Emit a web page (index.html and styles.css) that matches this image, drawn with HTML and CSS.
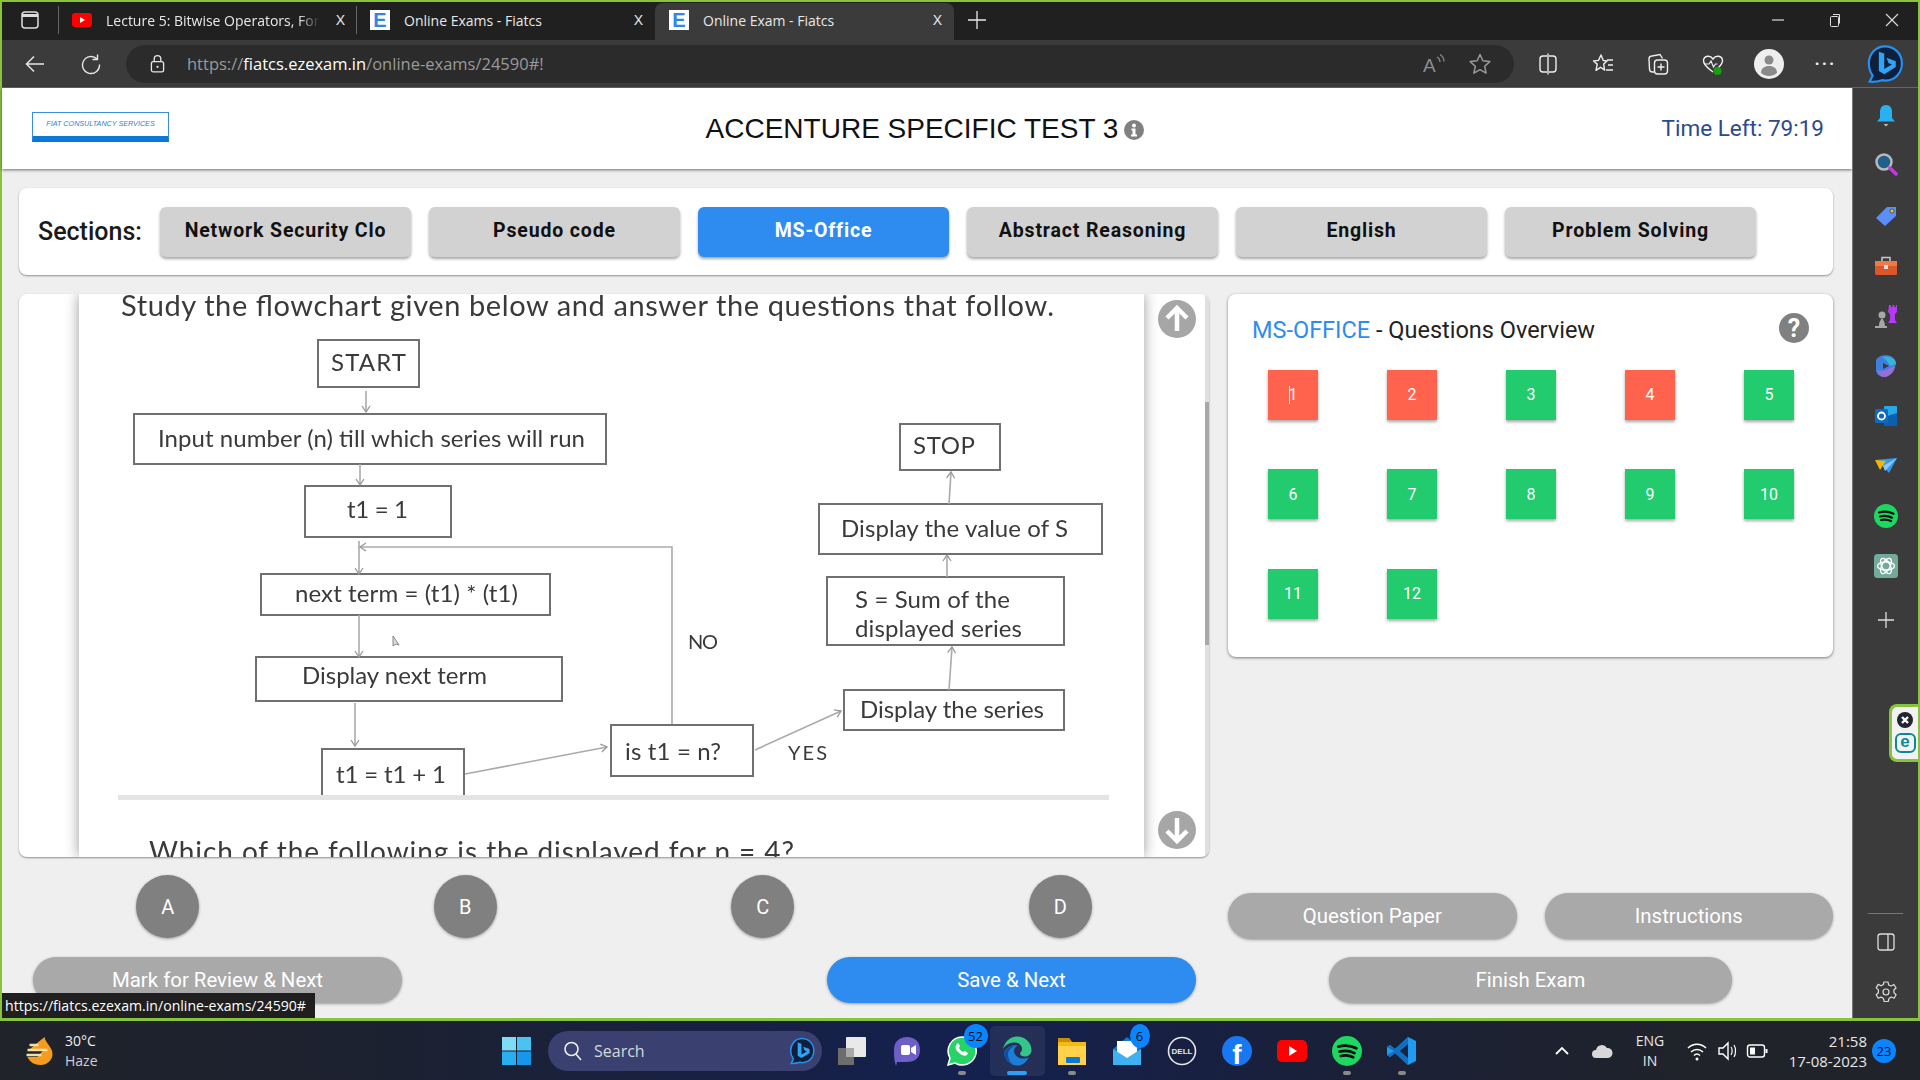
FILE: index.html
```html
<!DOCTYPE html>
<html lang="en">
<head>
    <meta charset="UTF-8">
    <title>Online Exam - Fiatcs</title>
    <link rel="stylesheet" href="styles.css">
</head>
<body>
    <svg class="defs" width="0" height="0">
        <symbol id="spotify" viewBox="0 0 24 24">
            <circle cx="12" cy="12" r="12" fill="#1ed760"/>
            <path d="M5 8.500c5-1.400 10-1 14.500 1.300M6 12.500c4-1 8.500-.7 12 1.200M7 16c3.500-.8 7-.5 10 1" fill="none" stroke="#111" stroke-width="2.200" stroke-linecap="round"/>
        </symbol>
        <symbol id="bing" viewBox="0 0 24 26">
            <path d="M12 1.500C6 1.500 1.500 6.500 1.500 12.500c0 3 1 6 2.500 8l-2 4c3 .3 6-.3 8-1 .8.200 1.500.3 2.500.3 6 0 10.500-5 10.500-11.300S18 1.500 12 1.500z" fill="#10203c" stroke="#2490f0" stroke-width="1.400"/>
            <path d="M8 5l3.500 1.200v10l5-2.800-2.200-1-1.300-3.400 6 2.200v3.800l-7.500 4.600L8 17.500z" fill="#2fa5f5"/>
        </symbol>
    </svg>

    <div class="window">
        <div class="titlebar">
            <svg class="tabs-icon" viewBox="0 0 18 18"><rect x="1" y="1" width="16" height="16" rx="3" fill="none" stroke="#ddd" stroke-width="1.500"/><path d="M1 4.500h16" stroke="#ddd" stroke-width="3"/></svg>
            <span class="tab-sep"></span>
            <div class="tab">
                <svg class="fav-yt" viewBox="0 0 20 14"><rect width="20" height="14" rx="3" fill="#f00"/><path d="M8 4l5 3-5 3z" fill="#fff"/></svg>
                <span class="tab-title tab-title-fade">Lecture 5: Bitwise Operators, For</span>
                <span class="tab-close">X</span>
            </div>
            <span class="tab-sep tab-sep-short"></span>
            <div class="tab">
                <span class="fav-e">E</span>
                <span class="tab-title">Online Exams - Fiatcs</span>
                <span class="tab-close">X</span>
            </div>
            <div class="tab tab-active">
                <span class="fav-e">E</span>
                <span class="tab-title">Online Exam - Fiatcs</span>
                <span class="tab-close">X</span>
            </div>
            <svg class="new-tab" viewBox="0 0 18 18"><path d="M9 0v18M0 9h18" stroke="#e8e8e8" stroke-width="1.300"/></svg>
            <div class="win-controls">
                <svg viewBox="0 0 14 14"><path d="M1 7h12" stroke="#ddd" stroke-width="1.200"/></svg>
                <svg viewBox="0 0 14 14"><rect x="2.500" y="3.500" width="8" height="10" rx="1" fill="none" stroke="#ddd"/><path d="M5 1.500h6.500v9" fill="none" stroke="#ddd"/></svg>
                <svg viewBox="0 0 14 14"><path d="M1 1l12 12M13 1L1 13" stroke="#ddd" stroke-width="1.100"/></svg>
            </div>
        </div>

        <div class="toolbar">
            <svg class="tool-icon tool-back" viewBox="0 0 22 22"><path d="M20 11H3M10 3.500L2.500 11l7.500 7.500" fill="none" stroke="#e6e6e6" stroke-width="1.500"/></svg>
            <svg class="tool-icon tool-reload" viewBox="0 0 22 22"><path d="M17 6a8.500 8.500 0 1 0 2.500 5.500M17.500 1.500V6.500H12.500" fill="none" stroke="#e6e6e6" stroke-width="1.400"/></svg>
            <div class="address">
                <svg class="lock" viewBox="0 0 16 20"><rect x="1.500" y="8" width="13" height="11" rx="2" fill="none" stroke="#e6e6e6" stroke-width="1.400"/><path d="M4.500 8V5a3.500 3.500 0 0 1 7 0v3" fill="none" stroke="#e6e6e6" stroke-width="1.400"/><circle cx="8" cy="13.500" r="1.200" fill="#e6e6e6"/></svg>
                <span class="url">https://<b>fiatcs.ezexam.in</b>/online-exams/24590#!</span>
                <svg class="addr-icon addr-read" viewBox="0 0 24 24"><text x="1" y="20" class="read-a">A</text><path d="M15 5c2 1 3 3 3 5M18 2.500c2.500 1.500 4 4 4 7" fill="none" stroke="#8d8d8d" stroke-width="1.200"/></svg>
                <svg class="addr-icon" viewBox="0 0 24 24"><path d="M12 2.500l2.900 6.300 6.900.8-5.100 4.700 1.400 6.800-6.100-3.400-6.100 3.400 1.400-6.800-5.100-4.700 6.900-.8z" fill="none" stroke="#9a9a9a" stroke-width="1.500" stroke-linejoin="round"/></svg>
            </div>
            <div class="tool-group">
                <svg viewBox="0 0 24 24"><path d="M11 4H7a3 3 0 0 0-3 3v10a3 3 0 0 0 3 3h4M13 4h4a3 3 0 0 1 3 3v10a3 3 0 0 1-3 3h-4M12 1.500v21" fill="none" stroke="#eee" stroke-width="1.400"/></svg>
                <svg viewBox="0 0 24 24"><path d="M10 3l2.300 5.500 3.700.4-3.300 3.200.9 6-4-2.800-4.600 3 1.200-6.200L2.500 9l5-.6z" fill="none" stroke="#eee" stroke-width="1.400" stroke-linejoin="round"/><path d="M16 8h6M17 13h5M15 18h7" stroke="#eee" stroke-width="1.400"/></svg>
                <svg viewBox="0 0 24 24"><path d="M8 20H6.500A3 3 0 0 1 3.500 17L3 7a3 3 0 0 1 3-3l8-1.500 2.500 4" fill="none" stroke="#eee" stroke-width="1.400"/><rect x="8.500" y="8" width="13" height="14" rx="3" fill="none" stroke="#eee" stroke-width="1.400"/><path d="M15 11.500v7M11.500 15h7" stroke="#eee" stroke-width="1.400"/></svg>
                <svg viewBox="0 0 24 24"><path d="M12 20C5 15 2 11.500 2.500 8c.6-4 6.500-5.500 9.500-1 3-4.500 9-3 9.500 1 .4 3.500-2.500 6-4.500 8" fill="none" stroke="#eee" stroke-width="1.400"/><path d="M3 12h5l2-3 2.500 6 2-3h2" fill="none" stroke="#eee" stroke-width="1.200"/><circle cx="16.500" cy="19" r="4" fill="#13a10e"/></svg>
                <svg class="avatar" viewBox="0 0 30 30"><circle cx="15" cy="15" r="15" fill="#eee"/><circle cx="15" cy="11" r="4.500" fill="#8a8a8a"/><path d="M7 24c0-5 3.500-7 8-7s8 2 8 7c-2.500 2-5 3-8 3s-5.500-1-8-3z" fill="#8a8a8a"/></svg>
                <span class="more">&middot;&middot;&middot;</span>
            </div>
            <svg class="tool-bing"><use href="#bing"/></svg>
        </div>

        <div class="body-row">
            <div class="page">
                <header class="exam-head">
                    <div class="logo"><span>FIAT CONSULTANCY SERVICES</span></div>
                    <h1 class="exam-title">ACCENTURE SPECIFIC TEST 3
                        <svg class="info" viewBox="0 0 20 20"><circle cx="10" cy="10" r="10" fill="#808080"/><circle cx="10" cy="5.500" r="2" fill="#fff"/><path d="M7.500 8.500h4v6h1.500v2H7v-2h1.500v-4h-1z" fill="#fff"/></svg>
                    </h1>
                    <div class="timer">Time Left: 79:19</div>
                </header>

                <section class="sections">
                    <span class="sections-label">Sections:</span>
                    <button class="section-btn">Network Security Clo</button>
                    <button class="section-btn">Pseudo code</button>
                    <button class="section-btn section-btn-active">MS-Office</button>
                    <button class="section-btn">Abstract Reasoning</button>
                    <button class="section-btn">English</button>
                    <button class="section-btn">Problem Solving</button>
                </section>

                <div class="exam-grid">
                    <div class="question">
                        <div class="q-strip"></div>
                        <div class="q-sheet">
                            <svg class="flowchart" viewBox="79 294 1065 563">
                                <defs>
                                    <marker id="head" markerWidth="9" markerHeight="10" refX="7" refY="5" orient="auto" markerUnits="userSpaceOnUse">
                                        <path d="M1 1l6 4-6 4" fill="none" stroke="#999" stroke-width="1.300"/>
                                    </marker>
                                </defs>
                                <text class="fc-title" x="121" y="316" textLength="933">Study the flowchart given below and answer the questions that follow.</text>

                                <g class="fc-box">
                                    <rect x="318" y="340" width="101" height="47"/>
                                    <rect x="134" y="414" width="472" height="50"/>
                                    <rect x="305" y="486" width="146" height="51"/>
                                    <rect x="261" y="574" width="289" height="41"/>
                                    <rect x="256" y="657" width="306" height="44"/>
                                    <rect x="322" y="749" width="142" height="48"/>
                                    <rect x="611" y="725" width="142" height="51"/>
                                    <rect x="844" y="690" width="220" height="40"/>
                                    <rect x="827" y="577" width="237" height="68"/>
                                    <rect x="819" y="504" width="283" height="50"/>
                                    <rect x="900" y="424" width="100" height="46"/>
                                </g>

                                <g class="fc-line">
                                    <path d="M366 391V412" marker-end="url(#head)"/>
                                    <path d="M360 464V485" marker-end="url(#head)"/>
                                    <path d="M359 541V574" marker-end="url(#head)"/>
                                    <path d="M672 724V547H360" marker-end="url(#head)"/>
                                    <path d="M359 615V657" marker-end="url(#head)"/>
                                    <path d="M355 703V746" marker-end="url(#head)"/>
                                    <path d="M465 774L607 747" marker-end="url(#head)"/>
                                    <path d="M755 750L841 711" marker-end="url(#head)"/>
                                    <path d="M949 690L952 647" marker-end="url(#head)"/>
                                    <path d="M947 577V555" marker-end="url(#head)"/>
                                    <path d="M949 504L951 472" marker-end="url(#head)"/>
                                </g>

                                <path class="fc-cursor" d="M393 636v10l3-2 3 1z"/>

                                <g class="fc-text">
                                    <text x="331" y="371" textLength="75">START</text>
                                    <text x="158" y="447" textLength="427">Input number (n) till which series will run</text>
                                    <text x="347" y="518" textLength="61">t1 = 1</text>
                                    <text x="295" y="602" textLength="223">next term = (t1) * (t1)</text>
                                    <text x="302" y="684" textLength="185">Display next term</text>
                                    <text x="336" y="783" textLength="110">t1 = t1 + 1</text>
                                    <text x="625" y="760" textLength="96">is t1 = n?</text>
                                    <text x="860" y="718" textLength="184">Display the series</text>
                                    <text x="855" y="608" textLength="155">S = Sum of the</text>
                                    <text x="855" y="637" textLength="167">displayed series</text>
                                    <text x="841" y="537" textLength="227">Display the value of S</text>
                                    <text x="913" y="454" textLength="62">STOP</text>
                                </g>
                                <text class="fc-label" x="688" y="649" textLength="30">NO</text>
                                <text class="fc-label" x="788" y="760" textLength="39">YES</text>

                                <rect class="fc-rule" x="118" y="795" width="991" height="5"/>
                                <text class="fc-ask" x="149" y="862" textLength="645">Which of the following is the displayed for n = 4?</text>
                            </svg>
                        </div>
                        <div class="q-nav">
                            <button class="q-arrow"><svg viewBox="0 0 38 38"><path d="M19 31V9M9 18l10-10 10 10" fill="none" stroke="#fff" stroke-width="4.500"/></svg></button>
                            <button class="q-arrow"><svg viewBox="0 0 38 38"><path d="M19 7v22M9 20l10 10 10-10" fill="none" stroke="#fff" stroke-width="4.500"/></svg></button>
                        </div>
                        <div class="q-scroll"><div class="q-thumb"></div></div>
                    </div>

                    <aside class="overview">
                        <div class="overview-head">
                            <h2 class="overview-title"><span class="overview-sec">MS-OFFICE</span> - Questions Overview</h2>
                            <svg class="help" viewBox="0 0 30 30"><circle cx="15" cy="15" r="15" fill="#808080"/><text x="15" y="24" class="help-q">?</text></svg>
                        </div>
                        <div class="tiles">
                            <div class="tile tile-red"><span class="caret"></span>1</div>
                            <div class="tile tile-red">2</div>
                            <div class="tile">3</div>
                            <div class="tile tile-red">4</div>
                            <div class="tile">5</div>
                            <div class="tile">6</div>
                            <div class="tile">7</div>
                            <div class="tile">8</div>
                            <div class="tile">9</div>
                            <div class="tile">10</div>
                            <div class="tile">11</div>
                            <div class="tile">12</div>
                        </div>
                    </aside>

                    <div class="options">
                        <button class="option">A</button>
                        <button class="option">B</button>
                        <button class="option">C</button>
                        <button class="option">D</button>
                    </div>

                    <div class="paper-btns">
                        <button class="pill">Question Paper</button>
                        <button class="pill">Instructions</button>
                    </div>

                    <div class="actions-left">
                        <button class="pill pill-wide">Mark for Review &amp; Next</button>
                        <button class="pill pill-wide pill-blue">Save &amp; Next</button>
                    </div>

                    <div class="actions-right">
                        <button class="pill pill-finish">Finish Exam</button>
                    </div>
                </div>

                <div class="status-url">https://fiatcs.ezexam.in/online-exams/24590#</div>
            </div>

            <div class="sidebar">
                <svg class="side-icon" viewBox="0 0 24 24"><path d="M12 1c-4 0-6 3-6 7v6l-3 3.500h18L18 14V8c0-4-2-7-6-7z" fill="#2ab0f5"/><path d="M9.500 20h5l-2.500 2.500z" fill="#bbb"/></svg>
                <svg class="side-icon side-search" viewBox="0 0 24 24"><circle cx="10" cy="10" r="7.500" fill="#1f5f8a" stroke="#b9b9b9" stroke-width="2.500"/><path d="M16 16l6 6" stroke="#c23be0" stroke-width="3.500" stroke-linecap="round"/></svg>
                <svg class="side-icon" viewBox="0 0 24 24"><path d="M13 3h9v9L11 22 2 14z" fill="#5b8dfb"/><circle cx="18" cy="7" r="2" fill="#f6c90e" stroke="#222" stroke-width=".6"/></svg>
                <svg class="side-icon" viewBox="0 0 24 24"><path d="M8 7V3.500h8V7" fill="none" stroke="#c9c9c9" stroke-width="1.500"/><rect x="1" y="7" width="22" height="14" rx="1.500" fill="#d9572b"/><rect x="1" y="7" width="22" height="5" fill="#ee7b45"/><rect x="10" y="11" width="4" height="4" fill="#ddd"/></svg>
                <svg class="side-icon" viewBox="0 0 24 24"><path d="M15 1h2v2h1.500V1h2v2H22V1h1v7l-2 2v6l2 3H14l2-3v-6l-2-2z" fill="#b13cf0"/><circle cx="8" cy="11" r="3.500" fill="#a7a7a7"/><path d="M5 22c0-4 1.500-5 2-7h2c.5 2 2 3 2 7h2v2H1v-2z" fill="#a7a7a7"/></svg>
                <svg class="side-icon" viewBox="0 0 24 24"><path d="M12 1c5 0 10 4 10 8 0 3-2 6-4 8-2 3-4 6-8 6-4 0-8-3-8-7V7c0-3 5-6 10-6z" fill="#3f7fe0"/><path d="M8 3c6-2 14 1 14 7l-6 2C14 8 12 5 8 3z" fill="#38b6d8"/><path d="M3 16c4 2 8 1 13-2l5-2c0 6-6 11-11 11-3 0-6-3-7-7z" fill="#9a6ed8"/><path d="M9 9l6 3-6 3z" fill="#3b3b3b"/></svg>
                <svg class="side-icon" viewBox="0 0 24 24"><rect x="10" y="2" width="13" height="20" rx="1" fill="#28a8ea"/><path d="M10 13l13-4v13H10z" fill="#0a5fb0"/><rect x="1" y="5" width="13" height="14" rx="1.500" fill="#0f6cbd"/><circle cx="7.500" cy="12" r="3.500" fill="none" stroke="#fff" stroke-width="1.800"/></svg>
                <svg class="side-icon" viewBox="0 0 24 24"><path d="M1 6l22-2-8 15-6-7z" fill="#2f9bf0"/><path d="M1 6l11 1-6 9z" fill="#f7b500"/><path d="M9 12l14-8-12 13z" fill="#8cc9fa"/></svg>
                <svg class="side-icon"><use href="#spotify"/></svg>
                <svg class="side-icon" viewBox="0 0 24 24"><rect width="24" height="24" rx="3.500" fill="#74aa9c"/><g fill="none" stroke="#fff" stroke-width="1.300"><ellipse cx="12" cy="12" rx="8.500" ry="4"/><ellipse cx="12" cy="12" rx="8.500" ry="4" transform="rotate(60 12 12)"/><ellipse cx="12" cy="12" rx="8.500" ry="4" transform="rotate(120 12 12)"/></g></svg>
                <svg class="side-icon side-plus" viewBox="0 0 24 24"><path d="M12 4v16M4 12h16" stroke="#ddd" stroke-width="1.300"/></svg>
                <div class="side-spacer"></div>
                <span class="side-rule"></span>
                <svg class="side-icon" viewBox="0 0 24 24"><rect x="4" y="4" width="16" height="16" rx="2.500" fill="none" stroke="#ddd" stroke-width="1.300"/><path d="M14 4v16" stroke="#ddd" stroke-width="1.300"/></svg>
                <svg class="side-icon" viewBox="0 0 24 24"><path d="M10 2h4l.7 3 2.500 1 2.700-1.500 2.200 3.500-2.300 2 .2 2.700 2.100 2-2 3.500-2.900-1.200-2.200 1.500-.8 3h-4l-.8-3-2.300-1.400-2.900 1.100-2-3.500 2.200-2V9.900l-2.200-2 2-3.500 2.900 1.400 2.300-1.300z" fill="none" stroke="#ddd" stroke-width="1.200" stroke-linejoin="round"/><circle cx="12" cy="12" r="3" fill="none" stroke="#ddd" stroke-width="1.200"/></svg>

                <div class="eset">
                    <svg viewBox="0 0 16 16"><circle cx="8" cy="8" r="8" fill="#23262f"/><path d="M5 5l6 6M11 5l-6 6" stroke="#fff" stroke-width="2.400"/></svg>
                    <div class="eset-e">e</div>
                </div>
            </div>
        </div>
    </div>

    <footer class="taskbar">
        <div class="weather">
            <svg class="weather-icon" viewBox="0 0 30 28"><path d="M20 0c1 6 8 10 8 17 0 6-5 11-12 11-6 0-11-3-13-8h10l5-6H3z" fill="#f39c1f"/><path d="M5 8h9M3 13h20M2 18h15" stroke="#f2dfa4" stroke-width="2.500"/></svg>
            <div class="weather-text"><span class="weather-temp">30°C</span><span>Haze</span></div>
        </div>

        <div class="task-center">
            <svg class="win-logo" viewBox="0 0 29 28"><rect width="14" height="13.500" fill="#7fdcf7"/><rect x="15" width="14" height="13.500" fill="#49c4f2"/><rect y="14.500" width="14" height="13.500" fill="#29aef0"/><rect x="15" y="14.500" width="14" height="13.500" fill="#1797ea"/></svg>
            <div class="task-search">
                <svg class="search-mag" viewBox="0 0 20 20"><circle cx="8.500" cy="8" r="6.500" fill="none" stroke="#eee" stroke-width="1.600"/><path d="M13 13l5 6" stroke="#eee" stroke-width="1.600"/></svg>
                <span class="search-word">Search</span>
                <svg class="search-bing"><use href="#bing"/></svg>
            </div>
            <div class="task-app">
                <svg viewBox="0 0 30 30"><rect x="1" y="12" width="16" height="17" fill="#6d6d6d"/><rect x="9" y="1" width="20" height="20" rx="1" fill="#e9e9e9"/><rect x="9" y="12" width="8" height="9" fill="#a9a9a9"/></svg>
            </div>
            <div class="task-app">
                <svg viewBox="0 0 30 30"><path d="M15 1c8 0 13 5 13 13s-5 12-13 12H5l-1 4c-2-5-2-11-2-16C2 6 7 1 15 1z" fill="#6d5fc7"/><rect x="9" y="9" width="9" height="10" rx="2" fill="#fff"/><path d="M19 12l5-3v10l-5-3z" fill="#fff"/></svg>
            </div>
            <div class="task-app task-dot">
                <svg viewBox="0 0 30 30"><path d="M15 1a14 14 0 0 0-12 21l-2 7 7-2A14 14 0 1 0 15 1z" fill="#25d366" stroke="#fff" stroke-width="1.500"/><path d="M10 8c-2 2-2 5 1 8s7 5 9 3l1-2-3-2-2 1c-2-1-3-2-4-4l1-2-2-3z" fill="#fff"/></svg>
                <span class="task-badge">52</span>
            </div>
            <div class="task-app task-app-active">
                <svg viewBox="0 0 30 30"><path d="M27 21c-3 6-7 8.500-11.500 8.500C8 29.500 2 23 2 16 6 10 12 8 16 9.500c-3 1-4 3.500-4 5.500 0 4 4 7.500 9 7.500 2.500 0 4.500-.5 6-1.500z" fill="#1a7fd8"/><path d="M1 14C2 6 8 .5 15 .5 23 .5 29.500 6.500 29.500 14c0 4-3 6.500-6.500 6.500-2.500 0-5-1-5-3 0-1 2-1.500 2-4.500 0-4-4-7-8-6.500C6 7 2 10 1 14z" fill="#35c58a"/><path d="M16 9.500c-5-1-11 2-14 7 .5 6 4.500 10 9 12-3-2-5-6-5-10 0-4 4-9 10-9z" fill="#0f4fa0"/></svg>
            </div>
            <div class="task-app task-dot">
                <svg viewBox="0 0 30 30"><path d="M1 2h11l3 4h14v23H1z" fill="#f5b914"/><path d="M1 2h11l3 4H1z" fill="#c98d08"/><rect x="1" y="10" width="28" height="19" fill="#ffd24a"/><rect x="9" y="21" width="14" height="6" rx="1" fill="#0f78d4"/></svg>
            </div>
            <div class="task-app">
                <svg viewBox="0 0 30 30"><path d="M1 13L15 1l14 12v16H1z" fill="#0f78d4"/><path d="M5 5h20v15L15 24 5 20z" fill="#fff"/><path d="M1 13l14 9 14-9v16H1z" fill="#3fb1f0"/></svg>
                <span class="task-badge task-badge-small">6</span>
            </div>
            <div class="task-app">
                <svg viewBox="0 0 30 30"><circle cx="15" cy="15" r="13.500" fill="none" stroke="#e8e8e8" stroke-width="1.600"/><text x="15" y="18" class="dell-word">DELL</text></svg>
            </div>
            <div class="task-app">
                <svg viewBox="0 0 30 30"><circle cx="15" cy="15" r="15" fill="#1877f2"/><text x="15" y="28" class="fb-f">f</text></svg>
            </div>
            <div class="task-app">
                <svg viewBox="0 0 30 30"><rect y="4" width="30" height="22" rx="5" fill="#f00"/><path d="M12 10l8 5-8 5z" fill="#fff"/></svg>
            </div>
            <div class="task-app task-dot">
                <svg><use href="#spotify"/></svg>
            </div>
            <div class="task-app task-dot">
                <svg viewBox="0 0 30 30"><path d="M21 1l8 4v20l-8 4L8 17l-5 4-3-2V11l3-2 5 4z" fill="#1f9cf0"/><path d="M21 1v28L8 17l-5 4-3-2 7-4-7-4 3-2 5 4z" fill="#0f6fc0"/><path d="M21 8l-8 7 8 7z" fill="#17233f"/></svg>
            </div>
        </div>

        <div class="tray">
            <svg class="tray-chev" viewBox="0 0 16 10"><path d="M2 8l6-6 6 6" fill="none" stroke="#fff" stroke-width="1.800"/></svg>
            <svg class="tray-cloud" viewBox="0 0 22 16"><path d="M5 15a4 4 0 0 1 0-8 6 6 0 0 1 11-2 5 5 0 0 1 1 10z" fill="#d8d8d8"/></svg>
            <div class="tray-lang"><span>ENG</span><span>IN</span></div>
            <svg class="tray-icon" viewBox="0 0 22 22"><path d="M2 8c5-5 13-5 18 0M5 12c3.500-3.500 8.500-3.500 12 0M8 15.500c2-2 4-2 6 0" fill="none" stroke="#fff" stroke-width="1.500"/><circle cx="11" cy="19" r="1.500" fill="#fff"/></svg>
            <svg class="tray-icon" viewBox="0 0 22 22"><path d="M3 8h4l5-5v16l-5-5H3z" fill="none" stroke="#fff" stroke-width="1.400"/><path d="M15 7c1.500 2 1.500 6 0 8M18 5c2 3 2 9 0 12" fill="none" stroke="#fff" stroke-width="1.200"/></svg>
            <svg class="tray-icon" viewBox="0 0 22 22"><rect x="1.500" y="5" width="17" height="12" rx="2.500" fill="none" stroke="#fff" stroke-width="1.400"/><rect x="4" y="7.500" width="5" height="7" fill="#fff"/><rect x="19.500" y="9" width="2" height="4" fill="#fff"/></svg>
            <div class="tray-clock"><span>21:58</span><span>17-08-2023</span></div>
            <span class="task-badge tray-badge">23</span>
        </div>
    </footer>
</body>
</html>
```

FILE: styles.css
```css
* {
    box-sizing: border-box;
}
html, body {
    margin: 0;
    height: 100%;
    overflow: hidden;
}
body {
    width: 1920px;
    height: 1080px;
    font-family: Roboto, Arial, sans-serif;
    background: #efefef;
}
button {
    border: none;
    font-family: inherit;
    cursor: pointer;
}
.defs {
    position: absolute;
}

/* browser frame */
.window {
    height: 1021px;
    border: solid #86c440;
    border-width: 2px 2px 3px 2px;
    display: flex;
    flex-direction: column;
}
.titlebar {
    height: 38px;
    padding-bottom: 2px;
    background: #202020;
    display: flex;
    align-items: center;
    font-family: "Open Sans", sans-serif;
    flex-shrink: 0;
}
.tabs-icon {
    width: 18px;
    height: 18px;
    margin: 0 19px 0 19px;
}
.tab-sep {
    width: 1px;
    height: 28px;
    background: #666;
}
.tab-sep-short {
    margin-left: -1px;
}
.tab {
    width: 298px;
    height: 37px;
    align-self: flex-start;
    margin-top: 1px;
    padding: 0 12px 3px 13px;
    display: flex;
    align-items: center;
    color: #e8e8e8;
    font-size: 14px;
    border-radius: 8px 8px 0 0;
}
.tab-active {
    background: #3b3b3b;
    width: 299px;
    padding-left: 14px;
}
.fav-yt {
    width: 20px;
    height: 14px;
    margin-right: 14px;
    flex-shrink: 0;
}
.fav-e {
    width: 20px;
    height: 20px;
    margin-right: 14px;
    flex-shrink: 0;
    background: #fff;
    color: #2f86e8;
    font: bold 20px/20px "Liberation Sans", sans-serif;
    text-align: center;
}
.tab-title {
    flex: 1;
    white-space: nowrap;
    overflow: hidden;
}
.tab-title-fade {
    -webkit-mask-image: linear-gradient(to right, #000 90%, transparent);
}
.tab-close {
    margin-left: 16px;
    font-size: 14px;
    font-family: "Liberation Sans", sans-serif;
}
.new-tab {
    width: 18px;
    height: 18px;
    margin-left: 14px;
}
.win-controls {
    margin-left: auto;
    display: flex;
    gap: 43px;
    padding-right: 19px;
}
.win-controls svg {
    width: 14px;
    height: 14px;
}

.toolbar {
    height: 48px;
    background: #3b3b3b;
    display: flex;
    align-items: center;
    flex-shrink: 0;
    border-bottom: 1px solid #666;
}
.tool-icon {
    width: 22px;
    height: 22px;
}
.tool-back {
    margin-left: 22px;
}
.tool-reload {
    margin-left: 34px;
    margin-right: 24px;
}
.address {
    width: 1388px;
    height: 38px;
    background: #2b2b2b;
    border-radius: 19px;
    display: flex;
    align-items: center;
    padding-left: 24px;
}
.lock {
    width: 15px;
    height: 19px;
    margin-right: 22px;
}
.url {
    font-family: "Open Sans", sans-serif;
    font-size: 16.5px;
    color: #9a9a9a;
}
.url b {
    color: #fff;
    font-weight: 400;
}
.addr-icon {
    width: 24px;
    height: 24px;
    margin-right: 22px;
}
.addr-read {
    margin-left: auto;
    margin-right: 22px;
}
.read-a {
    font: 19px "Liberation Sans", sans-serif;
    fill: #8d8d8d;
}
.tool-group {
    display: flex;
    align-items: center;
    gap: 31px;
    margin-left: 22px;
}
.tool-group svg {
    width: 24px;
    height: 24px;
}
.tool-group .avatar {
    width: 30px;
    height: 30px;
    margin-left: -2px;
}
.more {
    color: #eee;
    font-size: 24px;
    line-height: 20px;
    letter-spacing: 1px;
    width: 24px;
    margin-left: -1px;
}
.tool-bing {
    width: 38px;
    height: 40px;
    margin-left: 28px;
}

.body-row {
    flex: 1;
    display: flex;
    min-height: 0;
}

/* exam page */
.page {
    width: 1850px;
    position: relative;
    background: #efefef;
    padding: 0 19px 0 17px;
}
.exam-head {
    height: 81px;
    margin: 0 -19px 19px -17px;
    padding: 0 28px 0 30px;
    background: #fff;
    box-shadow: 0 1px 3px rgba(0,0,0,0.55);
    display: grid;
    grid-template-columns: 1fr auto 1fr;
    align-items: center;
}
.logo {
    width: 137px;
    height: 30px;
    margin-top: -3px;
    border: 1px solid #3b8fdd;
    border-bottom: 6px solid #0a78d7;
    color: #2d7fd0;
    font: italic 7.2px "Liberation Sans", sans-serif;
    line-height: 22px;
    text-align: center;
    white-space: nowrap;
}
.exam-title {
    margin: 0 6px 0 0;
    font: 400 28px "Liberation Sans", sans-serif;
    color: #111;
    display: flex;
    align-items: center;
    gap: 6px;
}
.info {
    width: 20px;
    height: 20px;
    margin-top: 3px;
}
.timer {
    justify-self: end;
    color: #2c4a8c;
    font-size: 22.5px;
    margin-top: -2px;
}

.sections {
    height: 87px;
    background: #fff;
    border-radius: 8px;
    box-shadow: 0 1px 2px rgba(0,0,0,0.4);
    display: flex;
    align-items: center;
    gap: 18px;
    padding-left: 19px;
}
.sections-label {
    width: 104px;
    font-size: 25px;
    font-weight: 500;
    color: #1a1a1a;
    white-space: nowrap;
}
.section-btn {
    width: 251px;
    height: 50px;
    padding-bottom: 4px;
    background: #d2d2d2;
    border-radius: 6px;
    box-shadow: 0 2px 3px rgba(0,0,0,0.35);
    color: #111;
    font-size: 19.5px;
    font-weight: 700;
    letter-spacing: 0.85px;
}
.section-btn-active {
    background: #2e8cf0;
    color: #fff;
}

.exam-grid {
    margin-top: 19px;
    display: grid;
    grid-template-columns: 1190px 605px;
    grid-template-rows: 563px 64px 46px;
    column-gap: 19px;
    row-gap: 18px;
}

/* question panel */
.question {
    background: #fff;
    border-radius: 8px;
    box-shadow: 0 1px 2px rgba(0,0,0,0.4);
    display: flex;
    overflow: hidden;
}
.q-strip {
    width: 60px;
}
.q-sheet {
    width: 1065px;
    background: #fff;
    position: relative;
    box-shadow: 0 0 13px rgba(0,0,0,0.4);
}
.flowchart {
    display: block;
    width: 1065px;
    height: 563px;
    filter: blur(0.35px);
}
.fc-box rect {
    fill: #fff;
    stroke: #707070;
    stroke-width: 2;
}
.fc-line path {
    fill: none;
    stroke: #aaa;
    stroke-width: 1.6;
}
.fc-cursor {
    fill: #ddd;
    stroke: #888;
}
.fc-title, .fc-ask, .fc-text text, .fc-label {
    font-family: Lato, sans-serif;
    fill: #3a3a3a;
}
.fc-title {
    font-size: 29px;
}
.fc-ask {
    font-size: 28px;
}
.fc-text text {
    font-size: 24px;
}
.fc-label {
    font-size: 20px;
}
.fc-rule {
    fill: #e4e4e4;
}
.q-nav {
    width: 61px;
    padding: 6px 0 8px 14px;
    display: flex;
    flex-direction: column;
    justify-content: space-between;
}
.q-arrow {
    width: 38px;
    height: 38px;
    padding: 0;
    border-radius: 50%;
    background: #a6a6a6;
}
.q-arrow svg {
    display: block;
    width: 38px;
    height: 38px;
}
.q-scroll {
    width: 4px;
    background: #e0e0e0;
    padding-top: 108px;
}
.q-thumb {
    height: 243px;
    background: #a8a8a8;
}

/* overview panel */
.overview {
    grid-row: 1;
    grid-column: 2;
    height: 363px;
    background: #fff;
    border-radius: 8px;
    box-shadow: 0 1px 3px rgba(0,0,0,0.5);
    padding: 0 24px;
}
.overview-head {
    height: 72px;
    display: flex;
    align-items: center;
    justify-content: space-between;
}
.overview-title {
    margin: 0;
    font-size: 23.5px;
    font-weight: 400;
    color: #222;
}
.overview-sec {
    color: #2e8cf0;
}
.help {
    width: 30px;
    height: 30px;
    margin-top: -4px;
}
.help-q {
    font: bold 25px Roboto, sans-serif;
    fill: #fff;
    text-anchor: middle;
}
.tiles {
    margin: 3.5px 0 0 16px;
    display: grid;
    grid-template-columns: repeat(5, 50px);
    grid-auto-rows: 50px;
    column-gap: 69px;
    row-gap: 49.5px;
}
.tile {
    background: #22cc6e;
    color: #fff;
    font-size: 16px;
    display: flex;
    align-items: center;
    justify-content: center;
    box-shadow: 0 2px 3px rgba(0,0,0,0.35);
}
.tile-red {
    background: #ff634e;
}
.caret {
    width: 1px;
    height: 18px;
    background: #fff;
    margin-right: -1px;
}

/* answers and buttons */
.options {
    display: grid;
    grid-template-columns: repeat(4, 1fr);
    justify-items: center;
}
.option {
    width: 63px;
    height: 63px;
    border-radius: 50%;
    background: #808080;
    color: #fff;
    font-size: 20px;
    box-shadow: 0 1px 3px rgba(0,0,0,0.35);
}
.paper-btns {
    display: flex;
    gap: 28px;
    align-items: flex-end;
}
.pill {
    flex: 1;
    height: 46px;
    border-radius: 23px;
    background: #a9a9a9;
    color: #fff;
    font-size: 20.4px;
    box-shadow: 0 1px 3px rgba(0,0,0,0.35);
}
.actions-left {
    display: flex;
    justify-content: space-between;
    padding: 0 13px 0 14px;
}
.actions-right {
    display: flex;
    justify-content: center;
}
.pill-wide {
    flex: none;
    width: 369px;
}
.pill-blue {
    background: #2e8cf0;
}
.pill-finish {
    flex: none;
    width: 403px;
}
.status-url {
    position: absolute;
    left: 0;
    bottom: 0;
    width: 313px;
    height: 25px;
    background: #1f1f1f;
    color: #fff;
    font: 14.1px/25px "Open Sans", sans-serif;
    padding-left: 3px;
    white-space: nowrap;
}

/* edge sidebar */
.sidebar {
    width: 66px;
    background: #3b3b3b;
    position: relative;
    border-left: 1px solid #777;
    display: flex;
    flex-direction: column;
    align-items: center;
    padding: 16px 0 14px;
    gap: 26px;
}
.side-icon {
    width: 24px;
    height: 24px;
    flex-shrink: 0;
}
.side-search {
    margin: -2px 0 2px;
}
.side-plus {
    margin-top: 4px;
}
.side-spacer {
    flex: 1;
}
.side-rule {
    width: 35px;
    height: 1px;
    background: #777;
    margin-bottom: -10px;
}
.eset {
    position: absolute;
    right: 0;
    top: 616px;
    width: 29px;
    height: 58px;
    background: #f2f2f2;
    border: 3px solid #86c440;
    border-right: none;
    border-radius: 8px 0 0 8px;
    display: flex;
    flex-direction: column;
    align-items: center;
    gap: 5px;
    padding: 5px 0 0 0;
}
.eset svg {
    width: 16px;
    height: 16px;
}
.eset-e {
    width: 21px;
    height: 20px;
    border: 2px solid #0a8a97;
    border-radius: 6px;
    color: #0a8a97;
    font: bold 17px/14px "Liberation Sans", sans-serif;
    text-align: center;
}

/* windows taskbar */
.taskbar {
    height: 59px;
    background: linear-gradient(to right, #20232a 0%, #1c2130 20%, #14204f 50%, #1a2038 70%, #20232a 88%);
    color: #e8e8e8;
    font-family: "Open Sans", sans-serif;
    display: flex;
    align-items: center;
    position: relative;
}
.weather {
    display: flex;
    align-items: center;
    margin-left: 24px;
    width: 478px;
    gap: 10px;
}
.weather-icon {
    width: 31px;
    height: 28px;
}
.weather-text {
    display: flex;
    flex-direction: column;
    font-size: 14px;
    line-height: 20px;
    color: #cfcfcf;
}
.weather-temp {
    color: #f0f0f0;
}
.task-center {
    display: flex;
    align-items: center;
}
.win-logo {
    width: 29px;
    height: 28px;
    margin-right: 17px;
}
.task-search {
    width: 274px;
    height: 40px;
    margin-right: 2.500px;
    border-radius: 20px;
    background: #3a4070;
    display: flex;
    align-items: center;
    padding: 0 7px 0 15px;
}
.search-mag {
    width: 20px;
    height: 20px;
    margin-right: 11px;
}
.search-word {
    font-size: 16px;
    color: #d8d8d8;
}
.search-bing {
    width: 26px;
    height: 28px;
    margin-left: auto;
}
.task-app {
    width: 55px;
    height: 50px;
    position: relative;
    display: flex;
    align-items: center;
    justify-content: center;
    flex-shrink: 0;
}
.task-app svg {
    width: 30px;
    height: 30px;
}
.task-app-active {
    background: rgba(255,255,255,0.07);
    border-radius: 5px;
}
.task-app-active::after, .task-dot::after {
    content: "";
    position: absolute;
    bottom: 1px;
    left: 50%;
    width: 8px;
    height: 4px;
    margin-left: -4px;
    border-radius: 2px;
    background: #8a8a8a;
}
.task-app-active::after {
    width: 20px;
    margin-left: -10px;
    background: #2da0f5;
}
.task-badge {
    width: 24px;
    height: 24px;
    border-radius: 50%;
    background: #0a84ff;
    color: #111;
    font-size: 13px;
    line-height: 24px;
    text-align: center;
}
.task-app .task-badge {
    position: absolute;
    top: -2px;
    right: 2px;
}
.task-app .task-badge-small {
    width: 20px;
    height: 24px;
    right: 5px;
}
.dell-word {
    font: bold 8px "Liberation Sans", sans-serif;
    fill: #e8e8e8;
    text-anchor: middle;
}
.fb-f {
    font: bold 28px "Liberation Sans", sans-serif;
    fill: #fff;
    text-anchor: middle;
}
.tray {
    position: absolute;
    left: 1554px;
    top: 0;
    height: 59px;
    display: flex;
    align-items: center;
}
.tray-chev {
    width: 16px;
    height: 10px;
}
.tray-cloud {
    width: 22px;
    height: 16px;
    margin-left: 21px;
}
.tray-lang {
    width: 48px;
    margin-left: 13px;
    display: flex;
    flex-direction: column;
    align-items: center;
    font-size: 14px;
    line-height: 20px;
}
.tray-icon {
    width: 22px;
    height: 22px;
    margin-left: 8px;
}
.tray-lang + .tray-icon {
    margin-left: 12px;
}
.tray-clock {
    width: 99px;
    display: flex;
    flex-direction: column;
    align-items: flex-end;
    font-size: 15px;
    line-height: 20px;
}
.tray-badge {
    margin-left: 5px;
}
```
